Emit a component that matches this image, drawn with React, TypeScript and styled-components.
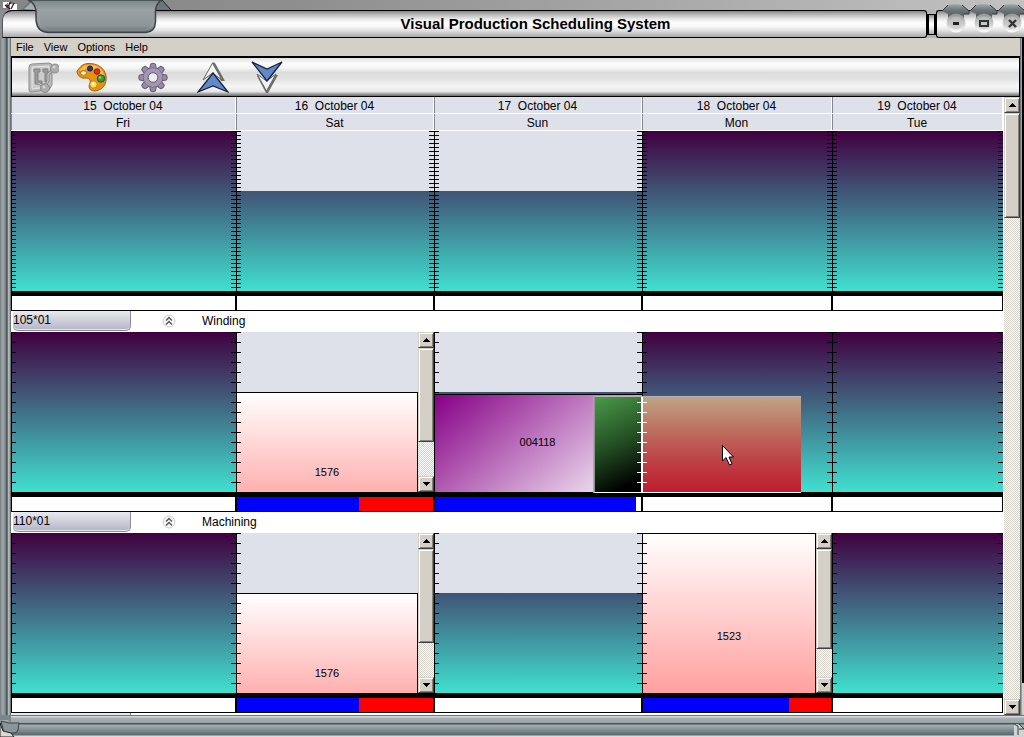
import React from "react";
import styled, { createGlobalStyle, css } from "styled-components";

const COLUMNS = "225fr 198fr 208fr 190fr 171fr";
const PANEL = "#dee1ea";
const FACE = "#d4d0c8";

const GlobalStyle = createGlobalStyle`
  *, *::before, *::after { box-sizing: border-box; }
  body {
    margin: 0;
    font-family: "Liberation Sans", Arial, sans-serif;
    font-size: 12px;
    color: #000;
    background: #9a9a9a;
  }
  button { margin: 0; padding: 0; border: 0; font: inherit; color: inherit; background: none; }
`;

const Desktop = styled.div`
  position: relative;
  display: flex;
  flex-direction: column;
  height: 100vh;
  min-height: 360px;
  overflow: hidden;
`;

const Backdrop = styled.div`
  flex: none;
  height: 10px;
  background: linear-gradient(90deg, #858585, #8f8f8f 30%, #c2c2c2);
`;

const metal = css`
  background: linear-gradient(#858585, #b4b4b4 12%, #e6e6e6 30%, #fdfdfd 45%, #f7f7f7 60%, #dedede 76%, #a9a9a9 100%);
`;

const TitleBar = styled.header`
  display: flex;
  flex: none;
  height: 28px;
  background: linear-gradient(90deg, #8b8f91 50%, #b4b4b4 50%);
`;

const TitlePlate = styled.div`
  ${metal}
  flex: 1;
  margin-left: 2px;
  border: 1px solid #000;
  border-left-color: #555;
  border-radius: 10px 3px 3px 0;
  display: flex;
  align-items: center;
  justify-content: center;
  padding-left: 142px;
`;

const Title = styled.h1`
  margin: 0;
  font-size: 15px;
  line-height: 18px;
  font-weight: 700;
  white-space: nowrap;
`;

const Joint = styled.div`
  ${metal}
  width: 9px;
  margin: 4px 0 3px;
  border: 1px solid #000;
  border-width: 1px 2px;
`;

const ControlPlate = styled.div`
  ${metal}
  width: 88px;
  border: 1px solid #000;
  border-right: 0;
  border-radius: 3px 0 0 3px;
  display: flex;
  padding-left: 5px;
`;

const WindowButton = styled.button`
  position: relative;
  flex: none;
  width: 28px;
  height: 26px;
  svg { position: absolute; left: 0; bottom: 0; display: block; }
`;

const HandleArt = styled.svg`
  position: absolute;
  left: 0;
  top: 0;
`;

const Middle = styled.div`
  display: flex;
  flex: 1;
  min-height: 0;
`;

const LeftFrame = styled.div`
  flex: none;
  width: 11px;
  background: linear-gradient(90deg, #7b8487 0 1px, #a0a8aa 2px, #929b9e 4px, #6d7679 6px, #343b3e 7px, #9ba5a8 8px, #c5cbcd 9px, #7d8588 10px, #5b6265 11px);
`;

const RightFrame = styled.div`
  flex: none;
  width: 4px;
  background:
    linear-gradient(90deg, #6e7678 0 1px, #9aa3a4 1px 2px, #000 2px) 0 0 / 100% calc(100% - 32px) no-repeat,
    linear-gradient(90deg, #6e7678 0 1px, #9aa3a4 1px 2px, #d4d0c8 2px);
`;

const Content = styled.main`
  display: flex;
  flex: 1;
  min-width: 0;
  flex-direction: column;
  background: #fff;
`;

const MenuBar = styled.nav`
  display: flex;
  flex: none;
  gap: 10px;
  height: 18px;
  padding-left: 5px;
  background: ${FACE};
`;

const MenuItem = styled.button`
  font-size: 11px;
  line-height: 18px;
`;

const Toolbar = styled.div`
  display: flex;
  flex: none;
  align-items: center;
  height: 41px;
  padding-left: 15px;
  border: 1px solid #000;
  border-top-width: 2px;
  background: linear-gradient(#e2e2e2, #fbfbfb 14%, #f6f6f6 26%, #dcdcdc 38%, #e2e2e2 55%, #f6f6f6 74%, #e8e8e8 88%, #9c9c9c 95%, #6a6a6e 100%);
`;

const ToolButton = styled.button<{ $gap: number }>`
  width: 32px;
  height: 36px;
  margin-left: ${(p) => p.$gap}px;
  svg { display: block; }
`;

const Pane = styled.div`
  display: flex;
  flex: 1;
  min-height: 0;
`;

const Schedule = styled.div`
  flex: 1;
  min-width: 0;
  overflow: hidden;
`;

const HeaderRow = styled.div`
  display: grid;
  grid-template-columns: ${COLUMNS};
`;

const HeaderCell = styled.div`
  height: 17px;
  padding-top: 1px;
  border: solid #fff;
  border-width: 0 1px 1px 0;
  box-shadow: inset 1px 0 #85878c;
  background: ${PANEL};
  line-height: 16px;
  text-align: center;
  white-space: pre;
`;

const ChartRow = styled.div`
  display: grid;
  grid-template-columns: ${COLUMNS};
  height: 165px;
  border-bottom: 5px solid #000;
`;

const tick = (step: number) =>
  `repeating-linear-gradient(#000 0 1px, transparent 1px ${step}px)`;

const DayCell = styled.div<{ $off?: boolean; $step: number; $right?: boolean }>`
  position: relative;
  display: flex;
  min-width: 0;
  border-left: 1px solid #000;
  background: ${(p) => (p.$off ? `linear-gradient(${PANEL}, ${PANEL}) 0 0 / 100% 60px no-repeat, ` : "")}
    linear-gradient(#400040, #40e0d0);
  &::after {
    content: "";
    position: absolute;
    inset: 0;
    pointer-events: none;
    background:
      ${(p) => tick(p.$step)} left / 4px 100% no-repeat
      ${(p) => (p.$right === false ? "" : `, ${tick(p.$step)} right / 5px 100% no-repeat`)};
  }
`;

const Lane = styled.div`
  display: flex;
  flex: 1;
  flex-direction: column;
  justify-content: flex-end;
`;

const Job = styled.div<{ $height: number; $drop: number }>`
  height: ${(p) => p.$height}px;
  padding-top: ${(p) => p.$drop}px;
  border: solid #000;
  border-width: 1px 1px 0 0;
  background: linear-gradient(#fff, #ffa0a0 ${(p) => (p.$height > 120 ? "100%" : "120%")});
  font-size: 11px;
  line-height: 14px;
  text-align: center;
`;

const PurpleJob = styled.div`
  position: relative;
  z-index: 1;
  height: 98px;
  padding: 40px 2px 0 0;
  border-top: 1px solid #000;
  background: linear-gradient(140deg, #860086, #f0e2f2 90%);
  font-size: 11px;
  line-height: 14px;
  text-align: center;
`;

const DraggedJob = styled.div`
  position: absolute;
  z-index: 2;
  top: 64px;
  left: calc(100% - 48px);
  width: 207px;
  height: 97px;
  display: flex;
  border-left: 1px solid #8b988b;
  border-top: 1px solid #b5aeb2;
  border-bottom: 1px solid #fff;
  box-shadow: -1px 0 #b99fbb;
`;

const DragGreen = styled.div`
  width: 46px;
  background: linear-gradient(155deg, #4a9a4a, #224c22 50%, #000 90%);
`;

const DragRed = styled.div`
  position: relative;
  flex: 1;
  border-left: 2px solid #fff;
  background: linear-gradient(#bfa585, #bd6a5c 38%, #bd4448 65%, #bf1c2e);
  &::after {
    content: "";
    position: absolute;
    left: -6px;
    top: 5px;
    bottom: 0;
    width: 10px;
    background: repeating-linear-gradient(#fff 0 1px, transparent 1px 10px);
  }
`;

const Cursor = styled.svg`
  position: absolute;
  left: 126px;
  top: 47px;
`;

const LoadRow = styled.div`
  display: grid;
  grid-template-columns: ${COLUMNS};
  height: 15px;
  border-bottom: 1px solid #000;
`;

const LoadCell = styled.div`
  display: flex;
  border: solid #000;
  border-width: 0 1px;
  background: #fff;
`;

const Load = styled.div<{ $tone: string; $share: number }>`
  flex: ${(p) => p.$share} 1 0;
  background: ${(p) => p.$tone};
`;

const ResourceBar = styled.div`
  display: flex;
  align-items: flex-start;
  height: 21px;
  background: #fff;
  line-height: 20px;
`;

const ResourceButton = styled.button`
  width: 118px;
  height: 20px;
  margin: 0 31px 0 2px;
  padding-bottom: 2px;
  border: 1px solid #8d8d9b;
  border-width: 0 1px 1px 0;
  border-radius: 0 0 5px 5px;
  box-shadow: inset 0 -1px #e4e4ec;
  background: linear-gradient(#eaeaf0, #d4d4de 40%, #b4b4c8);
  line-height: 16px;
  text-align: left;
`;

const CollapseButton = styled.button`
  width: 14px;
  height: 14px;
  margin: 3px 26px 0 0;
  svg { display: block; }
`;

const NextResource = styled.div`
  width: 120px;
  height: 21px;
  border-right: 1px solid #8d8d9b;
  background: linear-gradient(#eaeaf0, #b4b4c8);
`;

const ScrollTrack = styled.div`
  position: relative;
  z-index: 1;
  display: flex;
  flex: none;
  flex-direction: column;
  width: 16px;
  background: repeating-conic-gradient(${FACE} 0 25%, #fff 0 50%) 0 0 / 2px 2px;
`;

const raised = css`
  background: ${FACE};
  border: 1px solid;
  border-color: ${FACE} #404040 #404040 ${FACE};
  box-shadow: inset 1px 1px #fff, inset -1px -1px #868278;
`;

const ScrollButton = styled.button`
  ${raised}
  flex: none;
  display: flex;
  align-items: center;
  justify-content: center;
  width: 16px;
  height: 16px;
`;

const Thumb = styled.div<{ $share: number }>`
  ${raised}
  flex: ${(p) => p.$share} 1 0;
`;

const Rest = styled.div<{ $share: number }>`
  flex: ${(p) => p.$share} 1 0;
`;

const MainScroll = styled.div`
  display: flex;
  flex: none;
  width: 17px;
  padding-left: 1px;
  background: #fff;
`;

const BottomFrame = styled.footer`
  position: relative;
  flex: none;
  height: 22px;
  background: linear-gradient(#6d7476 0 1px, #d3d8da 1px 2px, #a7b0b3 3px, #99a3a6 8px, #4a5255 8px 9px, #a5afb3 10px, #899498 14px, #5d686c 20px, #dcdcdc 21px);
`;

const CornerArt = styled.svg<{ $side: "left" | "right" }>`
  position: absolute;
  top: 0;
  ${(p) => p.$side}: 0;
`;

function Scrollbar({ thumb, rest }: { thumb: number; rest: number }) {
  return (
    <ScrollTrack>
      <ScrollButton aria-label="Scroll up">
        <svg width="7" height="4" shapeRendering="crispEdges"><path d="M3 0h1v1h1v1h1v1h1v1H0V3h1V2h1V1h1z" /></svg>
      </ScrollButton>
      <Thumb $share={thumb} />
      <Rest $share={rest} />
      <ScrollButton aria-label="Scroll down">
        <svg width="7" height="4" shapeRendering="crispEdges"><path d="M0 0h7v1H6v1H5v1H4v1H3V3H2V2H1V1H0z" /></svg>
      </ScrollButton>
    </ScrollTrack>
  );
}

function WindowControl({ kind }: { kind: "Minimize" | "Maximize" | "Close" }) {
  return (
    <WindowButton aria-label={kind}>
      <svg width="28" height="33" viewBox="0 0 28 33">
        <defs>
          <linearGradient id={`knob${kind}`} x1="0" y1="0" x2="0" y2="1">
            <stop offset="0" stopColor="#8f9294" />
            <stop offset="0.5" stopColor="#c9c9c9" />
            <stop offset="1" stopColor="#ffffff" />
          </linearGradient>
          <linearGradient id={`cap${kind}`} x1="0" y1="0" x2="0" y2="1">
            <stop offset="0" stopColor="#a3abae" />
            <stop offset="0.4" stopColor="#6d7679" />
            <stop offset="1" stopColor="#4b5356" />
          </linearGradient>
        </defs>
        <path d="M0 7L6 1Q13 -1 20 1L27 7V10H22V15H6V10L2 8Z" fill={`url(#cap${kind})`} />
        <path d="M0 7L6 1M20 1L27 7V10H22" fill="none" stroke="#33393b" />
        <circle cx="14" cy="19" r="9.500" fill={`url(#knob${kind})`} />
        <circle cx="14" cy="19" r="6.500" fill="#c4c4c4" opacity="0.600" />
        {kind === "Minimize" && <path d="M11 19.500h6" stroke="#222" strokeWidth="3" />}
        {kind === "Maximize" && <rect x="10" y="17" width="8" height="5" fill="none" stroke="#333" strokeWidth="2" />}
        {kind === "Close" && <path d="M11 16l7 7M18 16l-7 7" stroke="#333" strokeWidth="2.400" />}
      </svg>
    </WindowButton>
  );
}

const MachineIcon = () => (
  <svg width="32" height="36" viewBox="0 0 32 36">
    <path d="M2 8q0-3 3-3l17-1q3 0 3 3v19l-3 5L4 33q-2 0-2-2z" fill="#b9b9b9" stroke="#8e8e8e" />
    <path d="M5 8l17-1-1 21L5 30z" fill="#cccccc" stroke="#e6e6e6" />
    <path d="M7 10H13V13H11V22H15V25H8V13H7zM16 10H21V20L18 23V13H16z" fill="#9a9a9a" stroke="#808080" />
    <path d="M28 9.500L21 15V22L18 28L11 24" fill="none" stroke="#8c8c8c" strokeWidth="3" />
    <path d="M28 9.500L21 15V22L18 28L11 24" fill="none" stroke="#d0d0d0" />
    <circle cx="28" cy="9.500" r="4.500" fill="#acacac" stroke="#8b8b8b" />
    <circle cx="18" cy="29" r="4.500" fill="#acacac" stroke="#8b8b8b" />
    <circle cx="27" cy="8" r="1.500" fill="#d4d4d4" /><circle cx="17" cy="28" r="1.500" fill="#d4d4d4" />
  </svg>
);

const PaletteIcon = () => (
  <svg width="32" height="36" viewBox="0 0 32 36">
    <path d="M1 12C4 9 5 5 12 4.500C21 4 29 9 30 17C31 25 27 31 19 32C13 32 12 28 14 24C15 21 13 19 10 19C6 20 1 17 1 12Z" fill="#e3940f" stroke="#a8610a" />
    <path d="M3 12C6 9 7 6 12 6C20 5 27 10 28 16C29 19 28 21 28 22C26 14 21 10 13 10C8 10 6 12 3 12Z" fill="#f5bd4a" />
    <ellipse cx="7.500" cy="14" rx="3" ry="2.300" fill="#f4f0ea" stroke="#b56c10" />
    <circle cx="14" cy="9.500" r="2.600" fill="#273a83" stroke="#172052" />
    <circle cx="21" cy="12.500" r="2.800" fill="#e12a20" stroke="#9b160f" />
    <circle cx="25" cy="19.500" r="3.700" fill="#3d9643" stroke="#155d1c" />
    <circle cx="17.500" cy="25.500" r="3.700" fill="#f7dc62" stroke="#c18a17" />
    <circle cx="17" cy="24.500" r="1.500" fill="#fff4b8" /><circle cx="24" cy="18.500" r="1.200" fill="#9bd39b" />
  </svg>
);

const GearIcon = () => (
  <svg width="32" height="36" viewBox="0 0 32 36">
    <g fill="#978ba8" stroke="#625a70" strokeLinejoin="round">
      {[0, 45, 90, 135, 180, 225, 270, 315].map((a) => (
        <path key={a} d="M12.500 11L13.500 5Q16 3.500 18.500 5L19.500 11z" transform={`rotate(${a} 16 18.500)`} />
      ))}
      <circle cx="16" cy="18.500" r="9.500" />
    </g>
    <circle cx="16" cy="18.500" r="7" fill="none" stroke="#a296b2" strokeWidth="5" />
    <circle cx="16" cy="18.500" r="4.800" fill="#ededed" stroke="#625a70" />
  </svg>
);

const UpIcon = () => (
  <svg width="32" height="36" viewBox="0 0 32 36">
    <path d="M15.500 3L18 4L28 22H24L15.500 7Z" fill="#6e6e6e" />
    <path d="M15.500 4L25 21L15.500 14L6 21Z" fill="#f3f3f3" stroke="#666" />
    <path d="M16 14L31 33L16 27L1 33Z" fill="#6288c8" stroke="#172238" strokeWidth="1.300" />
  </svg>
);

const DownIcon = () => (
  <svg width="32" height="36" viewBox="0 0 32 36">
    <path d="M27 16L17 34H15L6 17L9 16L16 29L23 16Z" fill="#6e6e6e" />
    <path d="M15.500 32L25 15L15.500 22L6 15Z" fill="#f3f3f3" stroke="#666" />
    <path d="M16 22L31 3L16 10L1 3Z" fill="#6288c8" stroke="#172238" strokeWidth="1.300" />
  </svg>
);

const CollapseIcon = () => (
  <svg width="14" height="14" viewBox="0 0 14 14">
    <circle cx="7" cy="7" r="6" fill="#f7f7f7" stroke="#cfcfcf" />
    <path d="M4 6.500l3-3 3 3M4 10.500l3-3 3 3" fill="none" stroke="#555" strokeWidth="1.400" />
  </svg>
);

const DATES = ["15  October 04", "16  October 04", "17  October 04", "18  October 04", "19  October 04"];
const DAYS = ["Fri", "Sat", "Sun", "Mon", "Tue"];
const BLUE = "#0000ff";
const RED = "#ff0000";

function Loads({ cells }: { cells: [string, number][][] }) {
  return (
    <LoadRow>
      {cells.map((parts, i) => (
        <LoadCell key={i}>
          {parts.map(([tone, share], k) => <Load key={k} $tone={tone} $share={share} />)}
        </LoadCell>
      ))}
    </LoadRow>
  );
}

function Resource({ code, name }: { code: string; name: string }) {
  return (
    <ResourceBar>
      <ResourceButton>{code}</ResourceButton>
      <CollapseButton aria-label={`Collapse ${name}`}><CollapseIcon /></CollapseButton>
      <span>{name}</span>
    </ResourceBar>
  );
}

export default function App() {
  return (
    <Desktop>
      <GlobalStyle />
      <Backdrop />
      <TitleBar>
        <TitlePlate><Title>Visual Production Scheduling System</Title></TitlePlate>
        <Joint />
        <ControlPlate>
          <WindowControl kind="Minimize" />
          <WindowControl kind="Maximize" />
          <WindowControl kind="Close" />
        </ControlPlate>
      </TitleBar>
      <HandleArt width="180" height="38" viewBox="0 0 180 38">
        <defs>
          <linearGradient id="handle" x1="0" y1="0" x2="0" y2="1">
            <stop offset="0" stopColor="#7d8689" />
            <stop offset="0.3" stopColor="#99a1a4" />
            <stop offset="0.8" stopColor="#8c9598" />
            <stop offset="1" stopColor="#5f686b" />
          </linearGradient>
        </defs>
        <path d="M21 10L31 0H36V10zM155 0H162L171 10H155z" fill="#6c7578" />
        <path d="M24 9l8-7h4v8z" fill="#a5adb0" />
        <path d="M162 0L171 10" stroke="#222" />
        <path d="M28 0Q34 2 36 10V20Q37 32 48 32.500H146Q155 32 155.500 22V10Q157 2 162 0Z" fill="url(#handle)" stroke="#3d4548" strokeWidth="1.500" />
        <path d="M39 12v10q1 7 9 8h97q7-1 8-8" fill="none" stroke="#aab2b5" opacity="0.500" />
        <path d="M3 2h6v2H6v4H3zM10 4h7v6h-7z" fill="#fff" />
        <path d="M5 5l5 4M11 2L7 7M14 3l-3 6" stroke="#2a1540" strokeWidth="1.300" />
        <path d="M7 3l3 3" stroke="#d08020" />
      </HandleArt>
      <Middle>
        <LeftFrame />
        <Content>
          <MenuBar>
            {["File", "View", "Options", "Help"].map((m) => <MenuItem key={m}>{m}</MenuItem>)}
          </MenuBar>
          <Toolbar>
            <ToolButton $gap={0} aria-label="Machines"><MachineIcon /></ToolButton>
            <ToolButton $gap={17} aria-label="Colours"><PaletteIcon /></ToolButton>
            <ToolButton $gap={29} aria-label="Settings"><GearIcon /></ToolButton>
            <ToolButton $gap={28} aria-label="Move up"><UpIcon /></ToolButton>
            <ToolButton $gap={22} aria-label="Move down"><DownIcon /></ToolButton>
          </Toolbar>
          <Pane>
            <Schedule>
              <HeaderRow>{DATES.map((d) => <HeaderCell key={d}>{d}</HeaderCell>)}</HeaderRow>
              <HeaderRow>{DAYS.map((d) => <HeaderCell key={d}>{d}</HeaderCell>)}</HeaderRow>
              <ChartRow>
                <DayCell $step={4} />
                <DayCell $step={4} $off />
                <DayCell $step={4} $off />
                <DayCell $step={4} />
                <DayCell $step={4} />
              </ChartRow>
              <Loads cells={[[], [], [], [], []]} />

              <Resource code="105*01" name="Winding" />
              <ChartRow>
                <DayCell $step={10} />
                <DayCell $step={10} $off $right={false}>
                  <Lane><Job $height={100} $drop={72}>1576</Job></Lane>
                  <Scrollbar thumb={93} rest={35} />
                </DayCell>
                <DayCell $step={10} $off>
                  <Lane><PurpleJob>004118</PurpleJob></Lane>
                  <DraggedJob>
                    <DragGreen />
                    <DragRed />
                    <Cursor width="14" height="22" viewBox="0 0 14 22">
                      <path d="M1.500 1.500V17L5 13.500L8.500 21L11 20L8 13H12.500Z" fill="#fff" stroke="#000" />
                    </Cursor>
                  </DraggedJob>
                </DayCell>
                <DayCell $step={10} />
                <DayCell $step={10} />
              </ChartRow>
              <Loads cells={[[], [[BLUE, 122], [RED, 74]], [[BLUE, 201], ["#fff", 5]], [], []]} />

              <Resource code="110*01" name="Machining" />
              <ChartRow>
                <DayCell $step={10} />
                <DayCell $step={10} $off $right={false}>
                  <Lane><Job $height={100} $drop={72}>1576</Job></Lane>
                  <Scrollbar thumb={93} rest={35} />
                </DayCell>
                <DayCell $step={10} $off />
                <DayCell $step={10} $right={false}>
                  <Lane><Job $height={160} $drop={95}>1523</Job></Lane>
                  <Scrollbar thumb={100} rest={28} />
                </DayCell>
                <DayCell $step={10} />
              </ChartRow>
              <Loads cells={[[], [[BLUE, 122], [RED, 74]], [], [[BLUE, 146], [RED, 42]], []]} />
              <NextResource />
            </Schedule>
            <MainScroll><Scrollbar thumb={103} rest={483} /></MainScroll>
          </Pane>
        </Content>
        <RightFrame />
      </Middle>
      <BottomFrame>
        <CornerArt $side="left" width="22" height="22" viewBox="0 0 22 22">
          <path d="M0 0H11V8L8 5H0z" fill="#7c8588" />
          <path d="M1 6l8 2h10l-1 7q-1 3-4 3H4z" fill="#8a9599" stroke="#3c4447" />
          <path d="M0 8l3 8 8 2 3 4H0z" fill="#d8d8d8" stroke="#222" />
        </CornerArt>
        <CornerArt $side="right" width="10" height="22" viewBox="0 0 10 22">
          <path d="M0 9h4l6 4v9H0z" fill="#cfd3d5" />
          <path d="M0 9l4 2v9M5 9l5 5M5 14h5" fill="none" stroke="#333a3d" />
        </CornerArt>
      </BottomFrame>
    </Desktop>
  );
}
